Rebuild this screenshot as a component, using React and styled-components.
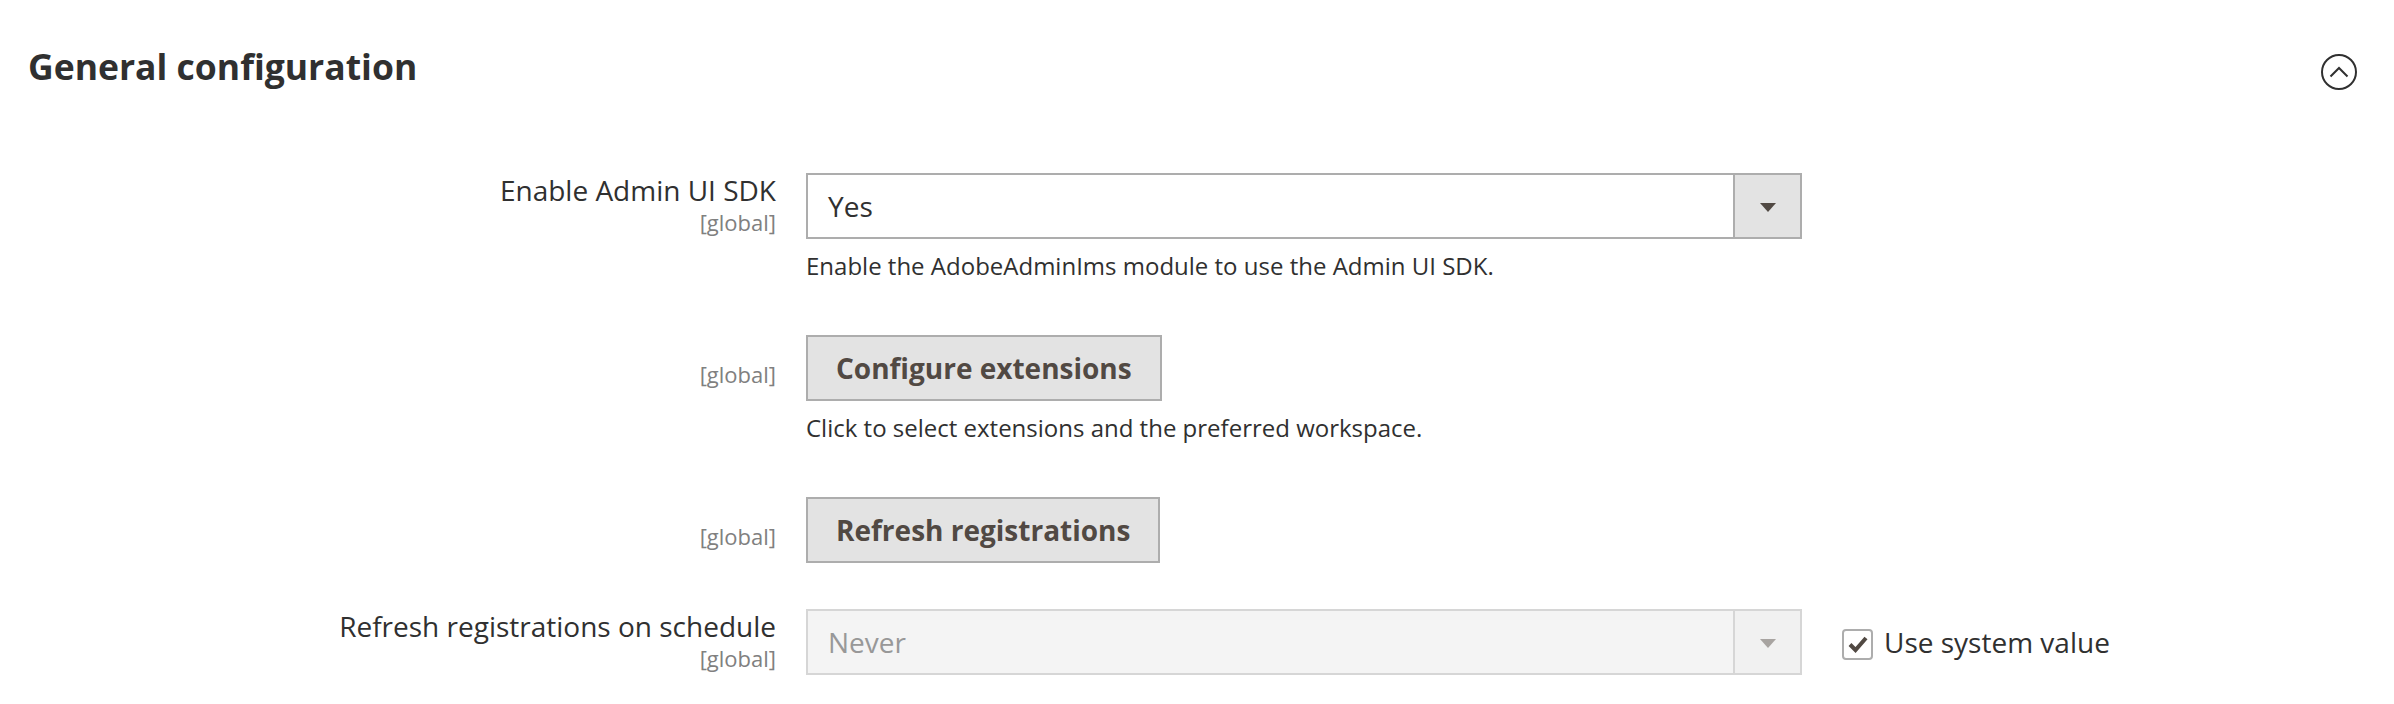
import React from 'react';
import styled, { createGlobalStyle } from 'styled-components';

const GlobalStyle = createGlobalStyle`
  body {
    margin: 0;
    background: #ffffff;
    font-family: "Open Sans", "Liberation Sans", sans-serif;
    color: #303030;
  }
  * { box-sizing: border-box; }
`;

const Section = styled.section`
  width: 2394px;
`;

const Header = styled.div`
  display: flex;
  justify-content: space-between;
  align-items: flex-start;
  padding: 42px 37px 0 28px;
`;

const Title = styled.h2`
  margin: 0;
  font-size: 35.5px;
  font-weight: 700;
  line-height: 49px;
  color: #303030;
`;

const CollapseButton = styled.button`
  margin-top: 12px;
  width: 36px;
  height: 36px;
  padding: 0;
  border: 0;
  background: none;
  display: flex;
  cursor: pointer;
`;

const Fieldset = styled.div`
  padding-top: 82px;
`;

const Field = styled.div`
  display: grid;
  grid-template-columns: 776px 996px auto;
  column-gap: 30px;
  margin-bottom: ${p => (p.$hasNote ? 53 : 46)}px;
`;

const LabelCell = styled.div`
  display: flex;
  flex-direction: column;
  align-items: flex-end;
  text-align: right;
`;

const Label = styled.label`
  font-size: 28px;
  line-height: 34px;
  color: #303030;
`;

const Scope = styled.span`
  font-size: 22px;
  line-height: 30px;
  color: #808080;
  margin-top: ${p => (p.$alone ? 24 : 0)}px;
`;

const Control = styled.div`
  display: flex;
  flex-direction: column;
  align-items: flex-start;
`;

const Select = styled.div`
  display: flex;
  width: 996px;
  height: 66px;
  border: 2px solid ${p => (p.$disabled ? '#d6d6d6' : '#adadad')};
  background: ${p => (p.$disabled ? '#f4f4f4' : '#ffffff')};
`;

const SelectValue = styled.div`
  flex: 1;
  display: flex;
  align-items: center;
  padding-left: 20px;
  font-size: 28px;
  color: ${p => (p.$disabled ? '#989898' : '#303030')};
`;

const SelectAction = styled.div`
  width: 67px;
  display: flex;
  align-items: center;
  justify-content: center;
  border-left: 2px solid ${p => (p.$disabled ? '#d6d6d6' : '#adadad')};
  background: ${p => (p.$disabled ? '#f1f1f1' : '#e3e3e3')};
  &::after {
    content: '';
    border-left: 8px solid transparent;
    border-right: 8px solid transparent;
    border-top: 9px solid ${p => (p.$disabled ? '#a8a4a1' : '#514943')};
    margin-top: 2px;
  }
`;

const Button = styled.button`
  height: 66px;
  padding: 0 28px;
  border: 2px solid #adadad;
  background: #e3e3e3;
  font-family: inherit;
  font-size: 28px;
  font-weight: 700;
  color: #514943;
  cursor: pointer;
`;

const Note = styled.div`
  margin-top: 10px;
  font-size: 24px;
  line-height: 33px;
  color: #303030;
`;

const UseDefault = styled.label`
  display: flex;
  align-items: center;
  gap: 11px;
  height: 66px;
  padding-left: 10px;
  font-size: 28px;
  color: #303030;
`;

const CheckBox = styled.span`
  width: 31px;
  height: 31px;
  border: 2px solid #adadad;
  border-radius: 4px;
  background: #ffffff;
  display: flex;
  align-items: center;
  justify-content: center;
  margin-top: 4px;
`;

const ChevronCircle = () => (
  <svg width="36" height="36" viewBox="0 0 36 36" fill="none">
    <circle cx="18" cy="18" r="17" stroke="#303030" strokeWidth="2" />
    <path d="M9.5 22.5 L18 14 L26.5 22.5" stroke="#303030" strokeWidth="2" />
  </svg>
);

const Check = () => (
  <svg width="22" height="20" viewBox="0 0 22 20" fill="none">
    <path d="M3 10.5 L8.5 16 L19 4" stroke="#514943" strokeWidth="4" />
  </svg>
);

const FakeSelect = ({ value, disabled }) => (
  <Select $disabled={disabled}>
    <SelectValue $disabled={disabled}>{value}</SelectValue>
    <SelectAction $disabled={disabled} />
  </Select>
);

const App = () => (
  <Section>
    <GlobalStyle />
    <Header>
      <Title>General configuration</Title>
      <CollapseButton aria-label="Collapse">
        <ChevronCircle />
      </CollapseButton>
    </Header>
    <Fieldset>
      <Field $hasNote>
        <LabelCell>
          <Label>Enable Admin UI SDK</Label>
          <Scope>[global]</Scope>
        </LabelCell>
        <Control>
          <FakeSelect value="Yes" />
          <Note>Enable the AdobeAdminIms module to use the Admin UI SDK.</Note>
        </Control>
      </Field>
      <Field $hasNote>
        <LabelCell>
          <Scope $alone>[global]</Scope>
        </LabelCell>
        <Control>
          <Button>Configure extensions</Button>
          <Note>Click to select extensions and the preferred workspace.</Note>
        </Control>
      </Field>
      <Field>
        <LabelCell>
          <Scope $alone>[global]</Scope>
        </LabelCell>
        <Control>
          <Button>Refresh registrations</Button>
        </Control>
      </Field>
      <Field>
        <LabelCell>
          <Label>Refresh registrations on schedule</Label>
          <Scope>[global]</Scope>
        </LabelCell>
        <Control>
          <FakeSelect value="Never" disabled />
        </Control>
        <UseDefault>
          <CheckBox>
            <Check />
          </CheckBox>
          Use system value
        </UseDefault>
      </Field>
    </Fieldset>
  </Section>
);

export default App;
